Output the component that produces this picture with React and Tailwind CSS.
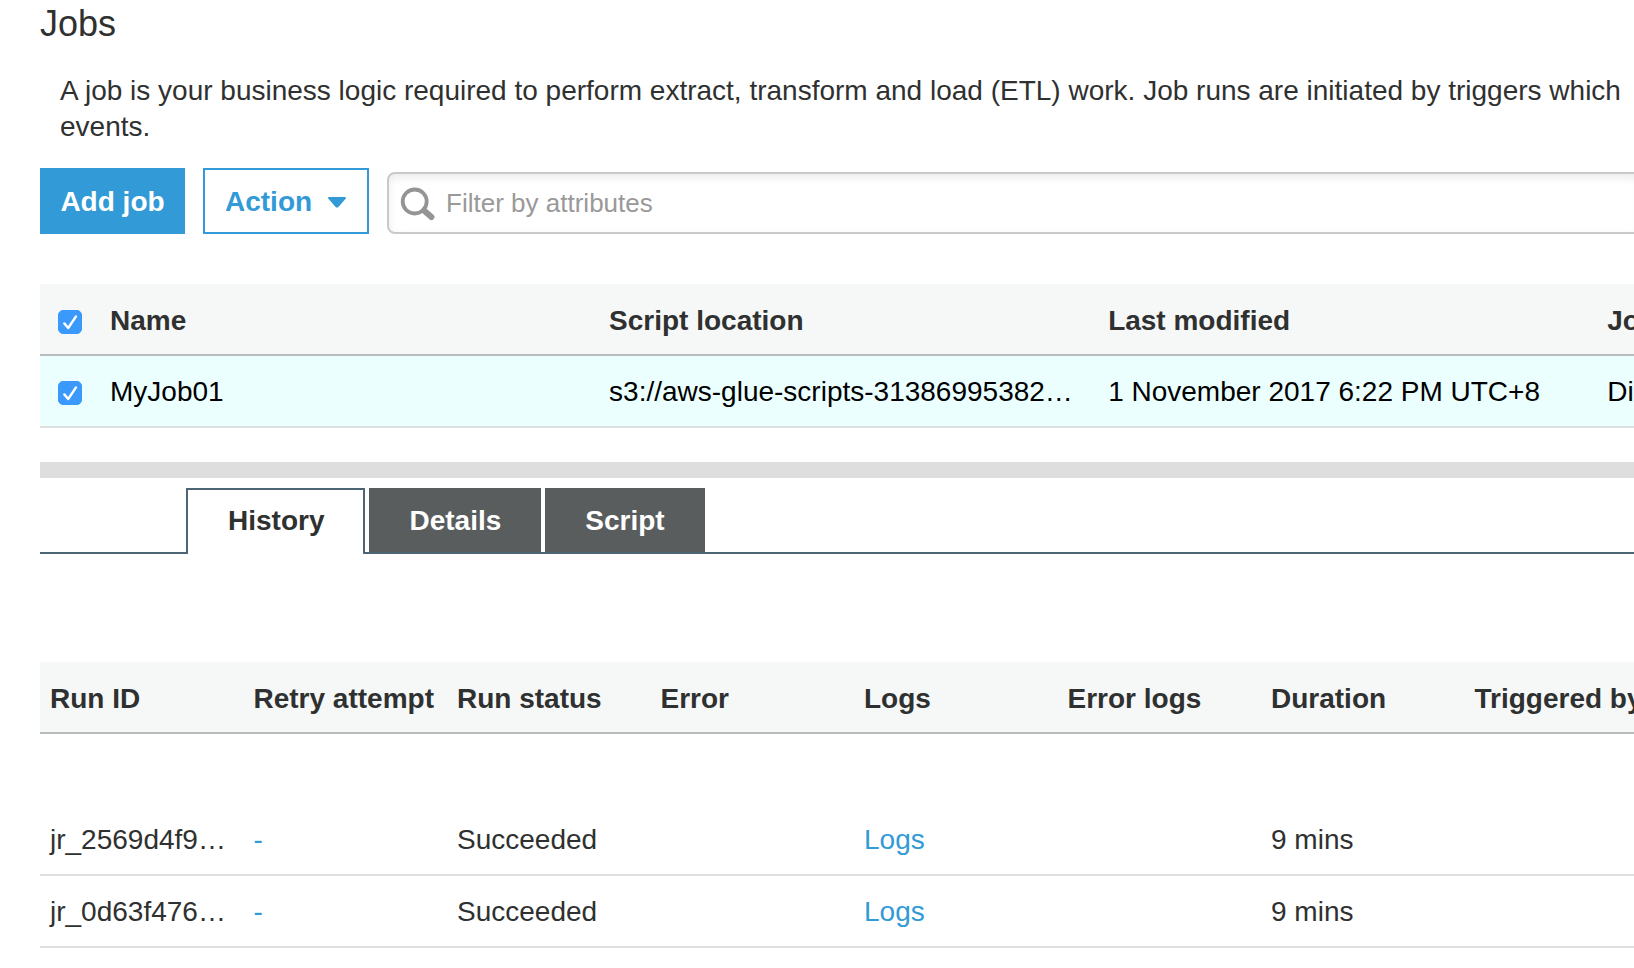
import { useState } from 'react'

const jobs = [
  {
    name: 'MyJob01',
    script: 's3://aws-glue-scripts-31386995382…',
    modified: '1 November 2017 6:22 PM UTC+8',
    bookmark: 'Disable',
  },
]

const runs = [
  { id: 'jr_2569d4f9…', status: 'Succeeded', duration: '9 mins' },
  { id: 'jr_0d63f476…', status: 'Succeeded', duration: '9 mins' },
]

const runColumns = ['Run ID', 'Retry attempt', 'Run status', 'Error', 'Logs', 'Error logs', 'Duration', 'Triggered by']

const tabs = ['History', 'Details', 'Script']

const Th = ({ children }) => (
  <th scope="col" className="px-[10px] pt-[19px] pb-[15px] text-left font-bold whitespace-nowrap bg-[#f6f8f8] border-b-2 border-[#b9bcbc]">
    {children}
  </th>
)

const Td = ({ children }) => (
  <td className="px-[10px] pt-[18px] pb-4 whitespace-nowrap border-b-2 border-[#dedfdf]">{children}</td>
)

const Checkbox = ({ label, checked, onChange }) => (
  <span className="grid w-6 h-6 mt-1">
    <input
      type="checkbox"
      aria-label={label}
      checked={checked}
      onChange={onChange}
      className="col-start-1 row-start-1 appearance-none w-6 h-6 rounded-[5px] border border-[#b5b5b5] checked:border-[#3b99fc] checked:bg-[#3b99fc]"
    />
    {checked && (
      <svg viewBox="0 0 24 24" className="col-start-1 row-start-1 w-6 h-6 pointer-events-none" fill="none" stroke="#fff" strokeWidth="2.4" strokeLinecap="round" strokeLinejoin="round">
        <path d="M6.3 13.4 10.2 18 18 6.4" />
      </svg>
    )}
  </span>
)

const App = () => {
  const [selected, setSelected] = useState(true)
  const [activeTab, setActiveTab] = useState('History')
  const toggle = () => setSelected(!selected)

  return (
    <main className="min-h-screen overflow-hidden bg-white pl-10 pb-5 font-['Liberation_Sans',Arial,sans-serif] text-[28px] leading-9 text-[#2f3130]">
      <h1 className="text-4xl leading-12">Jobs</h1>

      <p className="mt-[25px] pl-5 whitespace-nowrap">
        A job is your business logic required to perform extract, transform and load (ETL) work. Job runs are initiated by triggers which
        <br />
        events.
      </p>

      {/* Toolbar */}
      <div className="mt-[23px] flex items-end -mr-2">
        <button type="button" className="h-[66px] min-w-[145px] px-5 pt-0.5 bg-[#329ad6] text-white font-bold whitespace-nowrap">
          Add job
        </button>
        <button type="button" className="ml-[18px] h-[66px] pl-5 pr-[21px] pt-0.5 flex items-center gap-4 border-2 border-[#329ad6] bg-white text-[#329ad6] font-bold">
          Action
          <svg viewBox="0 0 18 11" className="w-[18px] h-[11px]" fill="currentColor">
            <path d="M1.2 0h15.6c1 0 1.5 1 .8 1.8L10.4 9.9c-.8.8-2 .8-2.8 0L.4 1.8C-.3 1 .2 0 1.2 0Z" />
          </svg>
        </button>
        <div className="ml-[18px] h-[62px] flex-1 flex items-center pl-[11px] border-2 border-[#c9c9c9] rounded-lg bg-white shadow-[inset_0_4px_8px_rgba(0,0,0,0.08)]">
          <svg viewBox="0 0 36 36" className="w-9 h-9 shrink-0" fill="none" stroke="#949494">
            <circle cx="14.7" cy="16.5" r="12" strokeWidth="3.8" />
            <path d="M24 25.4 31.4 32" strokeWidth="6" strokeLinecap="round" />
          </svg>
          <input
            type="text"
            aria-label="Filter by attributes"
            placeholder="Filter by attributes"
            className="ml-2.5 flex-1 min-w-0 bg-transparent outline-none text-[26px] placeholder:text-[#999]"
          />
        </div>
      </div>

      {/* Jobs list */}
      <table className="mt-[50px] w-[129%] table-fixed border-separate border-spacing-0">
        <colgroup>
          <col className="w-[60px]" />
          <col />
          <col />
          <col />
          <col />
        </colgroup>
        <thead>
          <tr>
            <th className="pl-[18px] pt-0.5 bg-[#f6f8f8] border-b-2 border-[#b9bcbc]">
              <Checkbox label="Select all jobs" checked={selected} onChange={toggle} />
            </th>
            <Th>Name</Th>
            <Th>Script location</Th>
            <Th>Last modified</Th>
            <Th>Job bookmark</Th>
          </tr>
        </thead>
        <tbody>
          {jobs.map((job) => (
            <tr key={job.name} className={selected ? 'bg-[#ebffff] text-black' : ''}>
              <td className="pl-[18px] border-b-2 border-[#dedfdf]">
                <Checkbox label={`Select ${job.name}`} checked={selected} onChange={toggle} />
              </td>
              <Td>{job.name}</Td>
              <Td>{job.script}</Td>
              <Td>{job.modified}</Td>
              <Td>{job.bookmark}</Td>
            </tr>
          ))}
        </tbody>
      </table>

      <div className="mt-[34px] h-4 bg-[#dedede]" />

      {/* Job detail tabs */}
      <div role="tablist" className="mt-[10px] h-[66px] flex gap-1 pl-[146px] border-b-2 border-[#4d6475] font-bold">
        {tabs.map((tab) => (
          <button
            key={tab}
            type="button"
            role="tab"
            aria-selected={tab === activeTab}
            onClick={() => setActiveTab(tab)}
            className={
              tab === activeTab
                ? 'h-[66px] pl-10 pr-[39px] pb-0.5 bg-white border-2 border-b-0 border-[#4d6475] rounded-b-xs'
                : 'h-16 px-10 pt-0.5 bg-[#595d5d] text-white'
            }
          >
            {tab}
          </button>
        ))}
      </div>

      {/* Run history */}
      <table className="mt-27 w-[calc(100%+34px)] table-fixed border-separate border-spacing-0">
        <thead>
          <tr>
            {runColumns.map((column) => (
              <Th key={column}>{column}</Th>
            ))}
          </tr>
        </thead>
        <tbody>
          <tr aria-hidden="true">
            <td colSpan={8} className="h-[70px]" />
          </tr>
          {runs.map((run) => (
            <tr key={run.id}>
              <Td>{run.id}</Td>
              <Td><a href="#retry" className="text-[#329ad6]">-</a></Td>
              <Td>{run.status}</Td>
              <Td />
              <Td><a href="#logs" className="text-[#329ad6]">Logs</a></Td>
              <Td />
              <Td>{run.duration}</Td>
              <Td />
            </tr>
          ))}
        </tbody>
      </table>
    </main>
  )
}

export default App
